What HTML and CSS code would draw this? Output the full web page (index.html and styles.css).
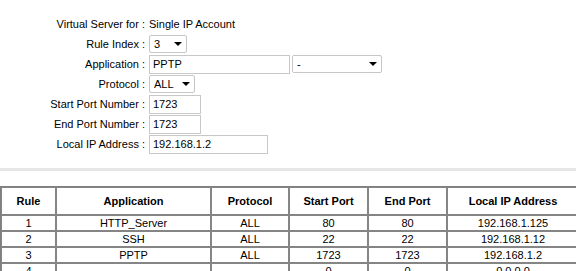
FILE: index.html
```html
<!DOCTYPE html>
<html lang="en">
<head>
  <meta charset="UTF-8">
  <title>Virtual Server</title>
  <link rel="stylesheet" href="styles.css">
</head>
<body>

  <form class="vs-form" action="/virtual-server" method="post">
    <label class="vs-label">Virtual Server for :</label>
    <div class="vs-field">Single IP Account</div>

    <label class="vs-label" for="rule-index">Rule Index :</label>
    <div class="vs-field">
      <span class="pick">
        <select id="rule-index" class="sel-index">
          <option>1</option>
          <option>2</option>
          <option selected>3</option>
          <option>4</option>
        </select>
      </span>
    </div>

    <label class="vs-label" for="app-name">Application :</label>
    <div class="vs-field">
      <input type="text" id="app-name" class="in-app" value="PPTP">
      <span class="pick">
        <select class="sel-app">
          <option selected>-</option>
          <option>HTTP_Server</option>
          <option>SSH</option>
          <option>PPTP</option>
        </select>
      </span>
    </div>

    <label class="vs-label" for="protocol">Protocol :</label>
    <div class="vs-field">
      <span class="pick">
        <select id="protocol" class="sel-proto">
          <option selected>ALL</option>
          <option>TCP</option>
          <option>UDP</option>
        </select>
      </span>
    </div>

    <label class="vs-label" for="start-port">Start Port Number :</label>
    <div class="vs-field">
      <input type="text" id="start-port" class="in-port" value="1723">
    </div>

    <label class="vs-label" for="end-port">End Port Number :</label>
    <div class="vs-field">
      <input type="text" id="end-port" class="in-port" value="1723">
    </div>

    <label class="vs-label" for="local-ip">Local IP Address :</label>
    <div class="vs-field">
      <input type="text" id="local-ip" class="in-ip" value="192.168.1.2">
    </div>
  </form>

  <div class="divider"></div>

  <table class="rules">
    <colgroup>
      <col class="c-rule">
      <col class="c-app">
      <col class="c-proto">
      <col class="c-start">
      <col class="c-end">
      <col class="c-ip">
    </colgroup>
    <tr>
      <th>Rule</th>
      <th>Application</th>
      <th>Protocol</th>
      <th>Start Port</th>
      <th>End Port</th>
      <th>Local IP Address</th>
    </tr>
    <tr><td>1</td><td>HTTP_Server</td><td>ALL</td><td>80</td><td>80</td><td>192.168.1.125</td></tr>
    <tr><td>2</td><td>SSH</td><td>ALL</td><td>22</td><td>22</td><td>192.168.1.12</td></tr>
    <tr><td>3</td><td>PPTP</td><td>ALL</td><td>1723</td><td>1723</td><td>192.168.1.2</td></tr>
    <tr><td>4</td><td></td><td></td><td>0</td><td>0</td><td>0.0.0.0</td></tr>
    <tr><td>5</td><td></td><td></td><td>0</td><td>0</td><td>0.0.0.0</td></tr>
    <tr><td>6</td><td></td><td></td><td>0</td><td>0</td><td>0.0.0.0</td></tr>
  </table>

</body>
</html>
```

FILE: styles.css
```css
body {
  margin: 0;
  font-family: "Liberation Sans", Arial, sans-serif;
  font-size: 11px;
  color: #000;
  background: #fff;
}

.vs-form {
  display: grid;
  grid-template-columns: 145px 1fr;
  grid-auto-rows: 20px;
  column-gap: 4px;
  align-items: center;
  padding-top: 14px;
}

.vs-label {
  text-align: right;
  white-space: nowrap;
}

.vs-field {
  display: flex;
  align-items: center;
  gap: 2px;
}

.vs-field input[type="text"] {
  box-sizing: border-box;
  height: 19px;
  padding: 0 3px;
  border: 1px solid #c8c8c8;
  font: inherit;
  color: #000;
}

.in-app { width: 141px; height: 18px; }
.in-port { width: 52px; }
.in-ip { width: 119px; }

.pick {
  position: relative;
  display: inline-block;
}

.pick select {
  appearance: none;
  -webkit-appearance: none;
  box-sizing: border-box;
  height: 18px;
  padding: 0 0 0 4px;
  border: 1px solid #c6c6c6;
  border-radius: 2px;
  background: #fff;
  font: inherit;
  color: #000;
}

.pick::after {
  content: "";
  position: absolute;
  right: 5px;
  top: 7px;
  border-left: 4px solid transparent;
  border-right: 4px solid transparent;
  border-top: 4px solid #000;
  pointer-events: none;
}

.sel-index { width: 38px; }
.sel-app { width: 90px; }
.sel-proto { width: 46px; }

.divider {
  margin-top: 14px;
  height: 3px;
  background: #e6e6e6;
}

.rules {
  margin-top: 15px;
  width: 578px;
  table-layout: fixed;
  border-collapse: separate;
  border-spacing: 0;
  border: 1px solid #7f7f7f;
}

.rules th,
.rules td {
  border: 1px solid #858585;
  text-align: center;
  line-height: 14px;
  white-space: nowrap;
  overflow: hidden;
}

.rules th {
  padding: 6px 0;
  font-weight: bold;
}

.rules td {
  padding: 0;
}

.c-rule { width: 55px; }
.c-app { width: 155px; }
.c-proto { width: 78px; }
.c-start { width: 79px; }
.c-end { width: 79px; }
.c-ip { width: 132px; }
```
